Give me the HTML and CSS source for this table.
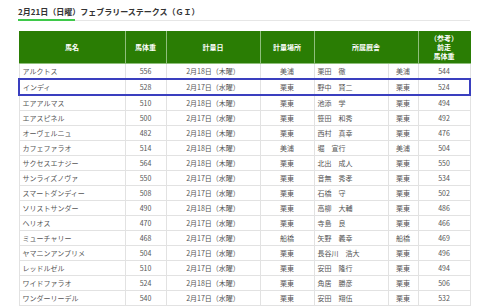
FILE: index.html
```html
<!DOCTYPE html>
<html lang="ja">
<head>
<meta charset="utf-8">
<link rel="stylesheet" href="styles.css">
</head>
<body>
<div class="page">
  <h2 class="title">2月21日（日曜）フェブラリーステークス（ＧＩ）</h2>
  <div class="rule"><span class="rule-accent"></span><span class="rule-rest"></span></div>
  <table class="weights">
    <colgroup>
      <col class="c-name"><col class="c-wt"><col class="c-date"><col class="c-place"><col class="c-trainer"><col class="c-aff"><col class="c-ref">
    </colgroup>
    <thead>
      <tr>
        <th>馬名</th>
        <th>馬体重</th>
        <th>計量日</th>
        <th>計量場所</th>
        <th colspan="2">所属厩舎</th>
        <th>（参考）<br>前走<br>馬体重</th>
      </tr>
    </thead>
    <tbody>
      <tr><td class="name">アルクトス</td><td>556</td><td>2月18日（木曜）</td><td>美浦</td><td class="name">栗田　徹</td><td>美浦</td><td>544</td></tr>
      <tr class="hl"><td class="name">インディ</td><td>528</td><td>2月17日（水曜）</td><td>栗東</td><td class="name">野中　賢二</td><td>栗東</td><td>524</td></tr>
      <tr><td class="name">エアアルマス</td><td>510</td><td>2月18日（木曜）</td><td>栗東</td><td class="name">池添　学</td><td>栗東</td><td>494</td></tr>
      <tr><td class="name">エアスピネル</td><td>500</td><td>2月17日（水曜）</td><td>栗東</td><td class="name">笹田　和秀</td><td>栗東</td><td>492</td></tr>
      <tr><td class="name">オーヴェルニュ</td><td>482</td><td>2月18日（木曜）</td><td>栗東</td><td class="name">西村　真幸</td><td>栗東</td><td>476</td></tr>
      <tr><td class="name">カフェファラオ</td><td>514</td><td>2月18日（木曜）</td><td>美浦</td><td class="name">堀　宣行</td><td>美浦</td><td>504</td></tr>
      <tr><td class="name">サクセスエナジー</td><td>564</td><td>2月18日（木曜）</td><td>栗東</td><td class="name">北出　成人</td><td>栗東</td><td>550</td></tr>
      <tr><td class="name">サンライズノヴァ</td><td>550</td><td>2月17日（水曜）</td><td>栗東</td><td class="name">音無　秀孝</td><td>栗東</td><td>534</td></tr>
      <tr><td class="name">スマートダンディー</td><td>508</td><td>2月17日（水曜）</td><td>栗東</td><td class="name">石橋　守</td><td>栗東</td><td>502</td></tr>
      <tr><td class="name">ソリストサンダー</td><td>490</td><td>2月18日（木曜）</td><td>栗東</td><td class="name">高柳　大輔</td><td>栗東</td><td>486</td></tr>
      <tr><td class="name">ヘリオス</td><td>470</td><td>2月17日（水曜）</td><td>栗東</td><td class="name">寺島　良</td><td>栗東</td><td>466</td></tr>
      <tr><td class="name">ミューチャリー</td><td>468</td><td>2月17日（水曜）</td><td>船橋</td><td class="name">矢野　義幸</td><td>船橋</td><td>469</td></tr>
      <tr><td class="name">ヤマニンアンプリメ</td><td>504</td><td>2月17日（水曜）</td><td>栗東</td><td class="name">長谷川　浩大</td><td>栗東</td><td>496</td></tr>
      <tr><td class="name">レッドルゼル</td><td>510</td><td>2月17日（水曜）</td><td>栗東</td><td class="name">安田　隆行</td><td>栗東</td><td>494</td></tr>
      <tr><td class="name">ワイドファラオ</td><td>524</td><td>2月18日（木曜）</td><td>栗東</td><td class="name">角居　勝彦</td><td>栗東</td><td>506</td></tr>
      <tr><td class="name">ワンダーリーデル</td><td>540</td><td>2月17日（水曜）</td><td>栗東</td><td class="name">安田　翔伍</td><td>栗東</td><td>532</td></tr>
    </tbody>
  </table>
</div>
</body>
</html>
```

FILE: styles.css
```css
html, body {
  margin: 0;
  padding: 0;
  background: #ffffff;
}

body {
  font-family: "Noto Sans CJK JP", "Noto Sans", sans-serif;
  color: #555555;
}

.page {
  padding: 6px 10px 0 18px;
}

.title {
  margin: 0;
  font-size: 8px;
  line-height: 11px;
  font-weight: bold;
  color: #333333;
}

.rule {
  display: flex;
  align-items: flex-end;
  margin-top: 2px;
  width: 452px;
}

.rule-accent {
  width: 57px;
  height: 2px;
  background: #3ec94a;
}

.rule-rest {
  flex: 1;
  height: 1px;
  background: #e6e6e6;
}

.weights {
  margin-top: 10px;
  width: 451px;
  border-collapse: collapse;
  table-layout: fixed;
  font-size: 7px;
}

.c-name { width: 106px; }
.c-wt { width: 41px; }
.c-date { width: 94px; }
.c-place { width: 54px; }
.c-trainer { width: 74px; }
.c-aff { width: 30px; }
.c-ref { width: 52px; }

.weights th {
  background: #2a7d04;
  color: #ffffff;
  font-weight: bold;
  height: 31px;
  padding: 0;
  line-height: 9px;
  border: 1px solid #8fbf7c;
  border-top-color: #2a7d04;
  text-align: center;
}

.weights th:first-child { border-left-color: #2a7d04; }
.weights th:last-child { border-right-color: #2a7d04; }

.weights td {
  height: 14px;
  padding: 0;
  border: 1px solid #e2e2e2;
  text-align: center;
  line-height: 14px;
  white-space: nowrap;
}

.weights td.name {
  text-align: left;
  padding-left: 3px;
}

.weights tr.hl td {
  border-top: 2px solid #3a3fbf;
  border-bottom: 2px solid #3a3fbf;
}

.weights tr.hl td:first-child { border-left: 2px solid #3a3fbf; }
.weights tr.hl td:last-child { border-right: 2px solid #3a3fbf; }
```
